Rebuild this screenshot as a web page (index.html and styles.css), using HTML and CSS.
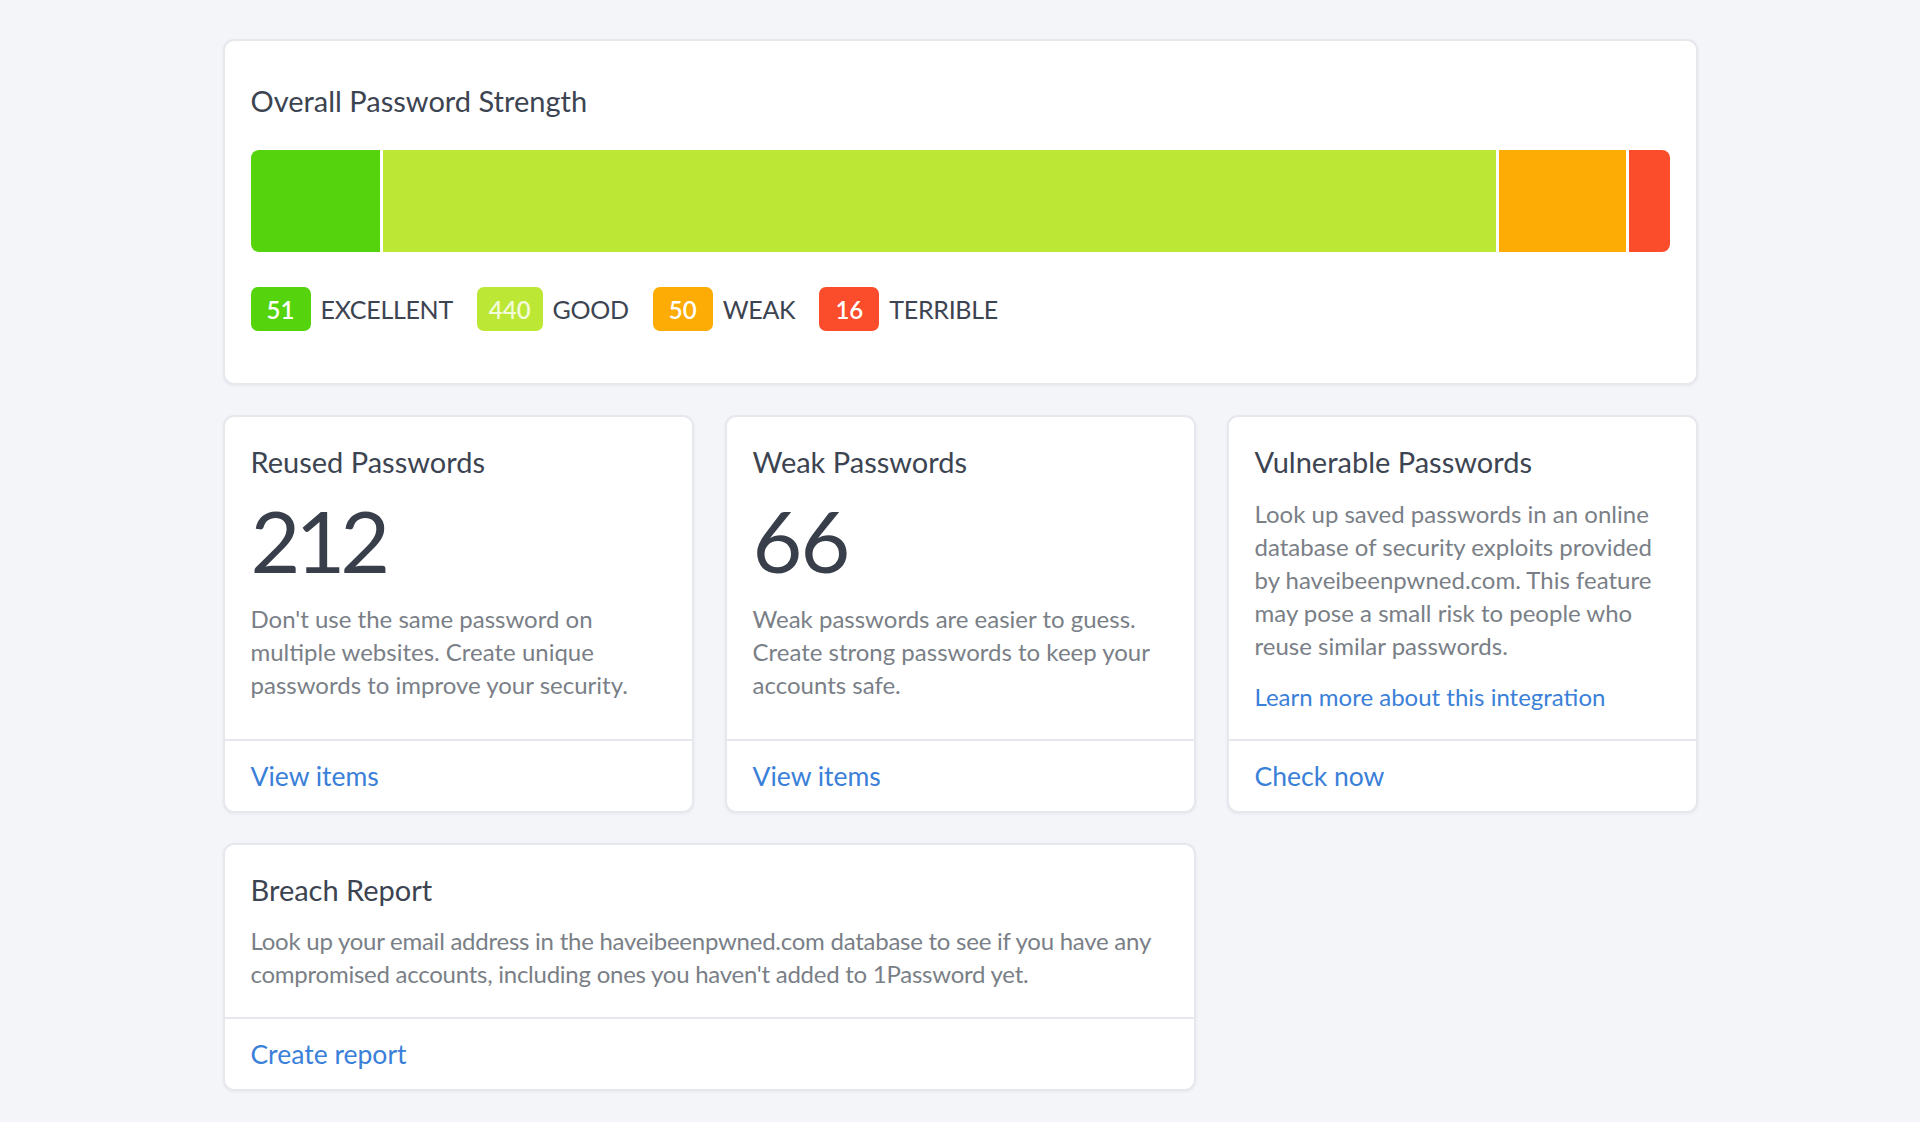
FILE: index.html
```html
<!DOCTYPE html>
<html lang="en">
<head>
<meta charset="utf-8">
<title>Watchtower</title>
<link rel="stylesheet" href="styles.css">
</head>
<body>
<main class="page">
  <section class="card strength">
    <h2 class="strength-title">Overall Password Strength</h2>
    <div class="bar">
      <div class="seg seg-excellent" style="flex-grow:51"></div>
      <div class="seg seg-good" style="flex-grow:440"></div>
      <div class="seg seg-weak" style="flex-grow:50"></div>
      <div class="seg seg-terrible" style="flex-grow:16"></div>
    </div>
    <div class="legend">
      <div class="legend-item"><span class="badge b-excellent">51</span><span class="legend-label">EXCELLENT</span></div>
      <div class="legend-item"><span class="badge b-good">440</span><span class="legend-label">GOOD</span></div>
      <div class="legend-item"><span class="badge b-weak">50</span><span class="legend-label">WEAK</span></div>
      <div class="legend-item"><span class="badge b-terrible">16</span><span class="legend-label">TERRIBLE</span></div>
    </div>
  </section>

  <section class="card tile">
    <div class="tile-body">
      <h3 class="tile-title">Reused Passwords</h3>
      <div class="tile-number num-212">212</div>
      <p class="tile-desc">Don't use the same password on multiple websites. Create unique passwords to improve your security.</p>
    </div>
    <div class="tile-footer"><a class="link" href="#">View items</a></div>
  </section>

  <section class="card tile">
    <div class="tile-body">
      <h3 class="tile-title">Weak Passwords</h3>
      <div class="tile-number">66</div>
      <p class="tile-desc">Weak passwords are easier to guess. Create strong passwords to keep your accounts safe.</p>
    </div>
    <div class="tile-footer"><a class="link" href="#">View items</a></div>
  </section>

  <section class="card tile">
    <div class="tile-body">
      <h3 class="tile-title">Vulnerable Passwords</h3>
      <p class="tile-desc vuln-desc">Look up saved passwords in an online database of security exploits provided by haveibeenpwned.com. This feature may pose a small risk to people who reuse similar passwords.</p>
      <a class="link small-link" href="#">Learn more about this integration</a>
    </div>
    <div class="tile-footer"><a class="link" href="#">Check now</a></div>
  </section>

  <section class="card tile breach">
    <div class="tile-body">
      <h3 class="tile-title">Breach Report</h3>
      <p class="tile-desc breach-desc">Look up your email address in the haveibeenpwned.com database to see if you have any compromised accounts, including ones you haven't added to 1Password yet.</p>
    </div>
    <div class="tile-footer"><a class="link" href="#">Create report</a></div>
  </section>
</main>
</body>
</html>
```

FILE: styles.css
```css
* { box-sizing: border-box; }

html, body {
  margin: 0;
  padding: 0;
}

body {
  background: #f4f5f9;
  font-family: Lato, "Open Sans", "Liberation Sans", sans-serif;
  color: #3d4451;
  min-height: 1122px;
}

.page {
  width: 1475px;
  margin: 0 auto;
  padding-top: 39px;
  display: grid;
  grid-template-columns: repeat(3, 1fr);
  gap: 30px 31px;
}

.card {
  background: #ffffff;
  border: 2px solid #e6e8ee;
  border-radius: 11px;
  box-shadow: 0 1px 3px rgba(30, 40, 60, 0.06);
}

/* Overall strength card */
.strength {
  grid-column: 1 / 4;
  height: 346px;
  padding: 42px 26px 0 26px;
}

.strength-title {
  margin: 0;
  font-size: 29px;
  line-height: 36px;
  font-weight: 400;
  color: #3d4451;
  letter-spacing: 0;
}

.bar {
  margin-top: 31px;
  height: 102px;
  display: flex;
  gap: 3px;
  border-radius: 8px;
  overflow: hidden;
}

.seg { flex-basis: 0; height: 100%; }
.seg-excellent { background: #55d40e; }
.seg-good { background: #bce835; }
.seg-weak { background: #fdab05; }
.seg-terrible { background: #fb4c2b; }

.legend {
  margin-top: 35px;
  display: flex;
  gap: 24px;
  align-items: center;
}

.legend-item {
  display: flex;
  align-items: center;
  gap: 10px;
}

.badge {
  height: 44px;
  min-width: 60px;
  padding: 0 12px;
  border-radius: 7px;
  display: inline-flex;
  align-items: center;
  justify-content: center;
  color: #ffffff;
  font-size: 24px;
  font-weight: 600;
}

.b-excellent { background: #55d40e; }
.b-good { background: #bce835; color: #f2fbd9; }
.b-weak { background: #fdab05; }
.b-terrible { background: #fb4c2b; }

.legend-label {
  font-size: 25px;
  color: #3d4451;
  letter-spacing: -0.3px;
}

/* Tiles */
.tile {
  display: flex;
  flex-direction: column;
}

.tile-body {
  flex: 1;
  padding: 28px 26px 26px 26px;
}

.tile-title {
  margin: 0;
  font-size: 29px;
  line-height: 34px;
  font-weight: 400;
  color: #3d4451;
  letter-spacing: 0;
}

.tile-number {
  margin-top: 21px;
  font-size: 86px;
  line-height: 80px;
  font-weight: 400;
  color: #383f4b;
  letter-spacing: -2px;
}

.num-212 { letter-spacing: -5px; }

.tile-desc {
  margin: 22px 0 0 0;
  font-size: 24px;
  line-height: 33px;
  color: #7a7f87;
  letter-spacing: 0;
}

.vuln-desc { margin-top: 18px; }

.breach-desc {
  margin-top: 17px;
  letter-spacing: -0.25px;
}

.link {
  color: #3a80d8;
  text-decoration: none;
  font-size: 26.5px;
  letter-spacing: 0;
}

.small-link {
  display: block;
  margin-top: 18px;
  font-size: 24px;
  line-height: 33px;
}

.tile-footer {
  height: 72px;
  border-top: 2px solid #e6e8ee;
  padding: 0 26px;
  display: flex;
  align-items: center;
}

.breach {
  grid-column: 1 / 3;
}

.breach .tile-body {
  padding-bottom: 27px;
}
```
